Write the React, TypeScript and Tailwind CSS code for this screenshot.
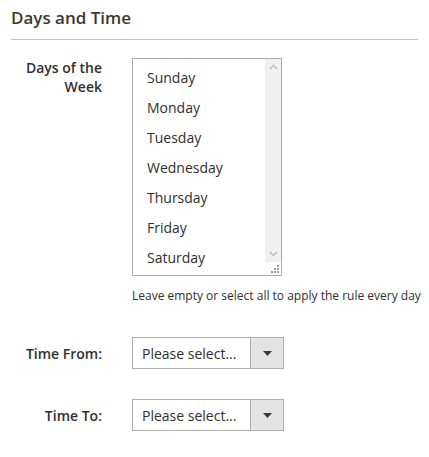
import React from "react";

const days = [
  "Sunday",
  "Monday",
  "Tuesday",
  "Wednesday",
  "Thursday",
  "Friday",
  "Saturday",
];

function SelectBox() {
  return (
    <div className="flex h-[32px] w-[152px] border border-[#adadad] bg-white">
      <div className="flex flex-1 items-center pl-[9px] text-[14px] text-[#303030]">
        Please select...
      </div>
      <div className="flex w-[33px] items-center justify-center border-l border-[#adadad] bg-[#e3e3e3]">
        <svg width="9" height="5" viewBox="0 0 9 5">
          <path d="M0 0h9L4.5 5z" fill="#41362f" />
        </svg>
      </div>
    </div>
  );
}

export default function App() {
  return (
    <div
      className="min-h-[457px] w-[429px] bg-white px-[11px] text-[#303030]"
      style={{ fontFamily: '"Open Sans", sans-serif' }}
    >
      <h2 className="border-b border-[#cac3b4] pt-[5px] pb-[9px] text-[17px] leading-[25px] font-semibold text-[#41362f]">
        Days and Time
      </h2>

      <div className="mt-[18px] flex">
        <div className="w-[91px] shrink-0 text-right text-[14px] leading-[19px] font-semibold">
          Days of the
          <br />
          Week
        </div>
        <div className="ml-[30px]">
          <div className="relative flex h-[218px] w-[150px] border border-[#adadad] bg-white">
            <div className="flex-1 pt-[4px]">
              {days.map((d) => (
                <div key={d} className="h-[30px] pl-[14px] text-[14px] leading-[30px]">
                  {d}
                </div>
              ))}
            </div>
            <div className="flex w-[16px] flex-col">
              <div className="flex flex-1 flex-col items-center justify-between bg-[#f0f0f0] py-[5px]">
                <svg width="9" height="6" viewBox="0 0 9 6">
                  <path d="M1 5l3.5-3.5L8 5" stroke="#c2c2c2" strokeWidth="1.6" fill="none" />
                </svg>
                <svg width="9" height="6" viewBox="0 0 9 6">
                  <path d="M1 1l3.5 3.5L8 1" stroke="#c2c2c2" strokeWidth="1.6" fill="none" />
                </svg>
              </div>
              <div className="flex h-[13px] items-end justify-end pr-[2px] pb-[2px]">
                <svg width="8" height="8" viewBox="0 0 8 8">
                  <rect x="6" y="0" width="2" height="2" fill="#a0a0a0" />
                  <rect x="3" y="3" width="2" height="2" fill="#a0a0a0" />
                  <rect x="6" y="3" width="2" height="2" fill="#a0a0a0" />
                  <rect x="0" y="6" width="2" height="2" fill="#a0a0a0" />
                  <rect x="3" y="6" width="2" height="2" fill="#a0a0a0" />
                  <rect x="6" y="6" width="2" height="2" fill="#a0a0a0" />
                </svg>
              </div>
            </div>
          </div>
          <p className="mt-[11px] whitespace-nowrap text-[12px] leading-[17px]">
            Leave empty or select all to apply the rule every day
          </p>
        </div>
      </div>

      <div className="mt-[33px] flex items-center">
        <div className="w-[91px] shrink-0 text-right text-[14px] font-semibold">Time From:</div>
        <div className="ml-[30px]">
          <SelectBox />
        </div>
      </div>

      <div className="mt-[30px] flex items-center">
        <div className="w-[91px] shrink-0 text-right text-[14px] font-semibold">Time To:</div>
        <div className="ml-[30px]">
          <SelectBox />
        </div>
      </div>
    </div>
  );
}
